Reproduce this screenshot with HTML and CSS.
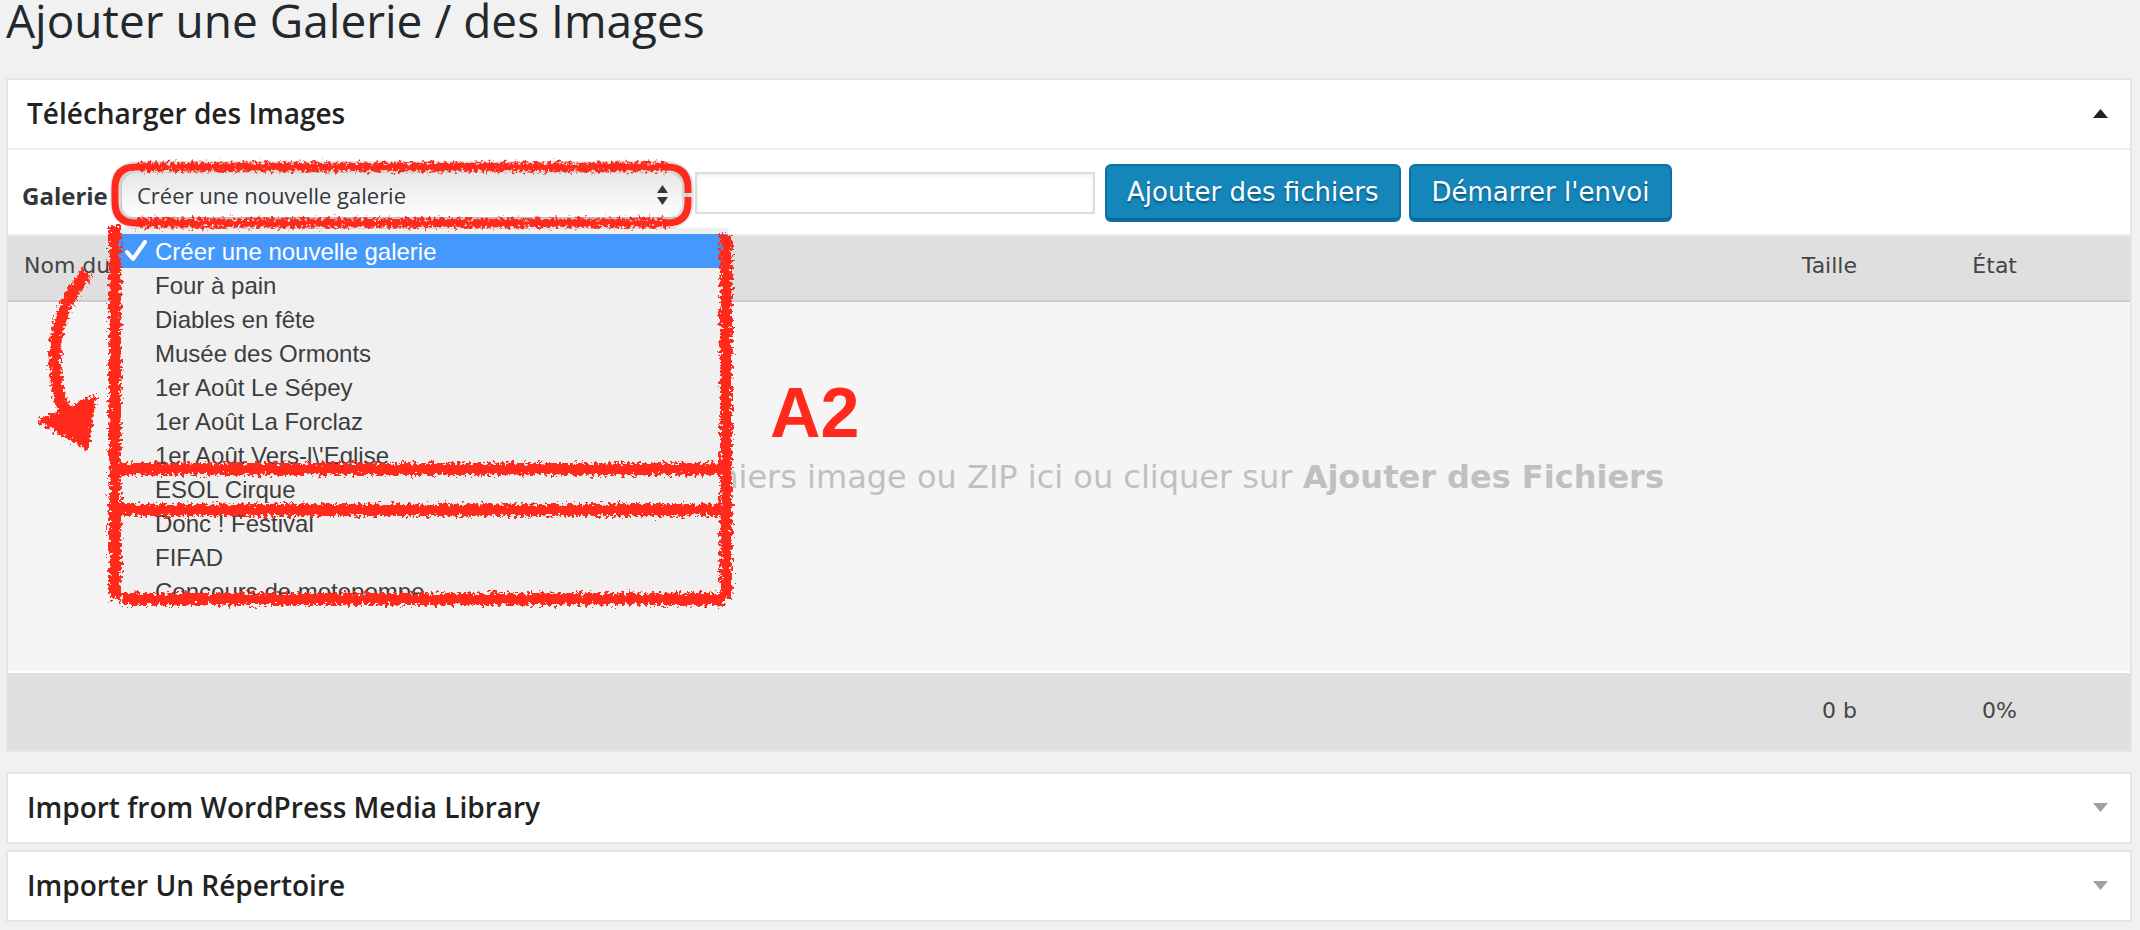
FILE: index.html
```html
<!DOCTYPE html>
<html lang="fr">
<head>
    <meta charset="UTF-8">
    <title>Ajouter une Galerie / des Images</title>
    <link rel="stylesheet" href="styles.css">
</head>
<body>
    <h1>Ajouter une Galerie / des Images</h1>

    <section class="panel panel-open">
        <h2 class="panel-title">
            Télécharger des Images
            <svg class="arrow-up" viewBox="0 0 15 9" aria-hidden="true"><path d="M7.500 0 15 9H0z"/></svg>
        </h2>

        <form class="toolbar">
            <label for="galerie">Galerie</label>
            <div class="select-wrap">
                <select id="galerie">
                    <option selected>Créer une nouvelle galerie</option>
                    <option>Four à pain</option>
                    <option>Diables en fête</option>
                    <option>Musée des Ormonts</option>
                    <option>1er Août Le Sépey</option>
                    <option>1er Août La Forclaz</option>
                    <option>1er Août Vers-l\'Eglise</option>
                    <option>ESOL Cirque</option>
                    <option>Donc ! Festival</option>
                    <option>FIFAD</option>
                    <option>Concours de motopompe</option>
                </select>
                <svg class="select-arrows" viewBox="0 0 11 20" aria-hidden="true"><path d="M5.500 0 11 8H0zM0 12h11l-5.500 8z"/></svg>
            </div>
            <input class="gallery-name" type="text" aria-label="Nom de la galerie">
            <button type="button" class="button-primary">Ajouter des fichiers</button>
            <button type="button" class="button-primary">Démarrer l'envoi</button>
        </form>

        <table class="files">
            <thead>
                <tr>
                    <th class="col-name">Nom du fichier</th>
                    <th class="col-size">Taille</th>
                    <th class="col-status">État</th>
                </tr>
            </thead>
            <tbody>
                <tr>
                    <td class="drop-area" colspan="3">Déposez des fichiers image ou ZIP ici ou cliquer sur <strong>Ajouter des Fichiers</strong></td>
                </tr>
            </tbody>
            <tfoot>
                <tr>
                    <td class="col-name"></td>
                    <td class="col-size">0 b</td>
                    <td class="col-status">0%</td>
                </tr>
            </tfoot>
        </table>

        <!-- Liste ouverte -->
        <ul class="menu">
            <li class="selected"><svg class="check" viewBox="0 0 22 22" aria-hidden="true"><path d="M2 12 8 19 20 2"/></svg>Créer une nouvelle galerie</li>
            <li>Four à pain</li>
            <li>Diables en fête</li>
            <li>Musée des Ormonts</li>
            <li>1er Août Le Sépey</li>
            <li>1er Août La Forclaz</li>
            <li>1er Août Vers-l\'Eglise</li>
            <li>ESOL Cirque</li>
            <li>Donc ! Festival</li>
            <li>FIFAD</li>
            <li>Concours de motopompe</li>
        </ul>

        <!-- Annotations au crayon rouge -->
        <svg class="marks" viewBox="0 0 740 540" aria-hidden="true">
            <defs>
                <filter id="crayon" filterUnits="userSpaceOnUse" x="0" y="0" width="740" height="540">
                    <feTurbulence type="fractalNoise" baseFrequency="0.3" numOctaves="4" seed="4" result="noise"/>
                    <feDisplacementMap in="SourceGraphic" in2="noise" scale="12" xChannelSelector="R" yChannelSelector="G"/>
                </filter>
            </defs>
            <rect class="shade" x="108" y="87" width="572" height="56" rx="20"/>
            <g filter="url(#crayon)">
                <path class="line" d="M129 87H659M129 143H659"/>
                <path class="line thick" d="M107 146V519M718 154V519M112 389H718M112 430H718M114 519H716"/>
                <path class="line thick" d="M79 193C42 235 40 290 58 335"/>
                <path class="head" d="M33 341 86 317 79 368z"/>
            </g>
            <path class="line corner" d="M133 87H128Q107 87 107 108V122Q107 143 128 143H133M655 87H659Q680 87 680 108V113M680 117V122Q680 143 659 143H655"/>
        </svg>
        <span class="mark-label">A2</span>
    </section>

    <section class="panel">
        <h2 class="panel-title">
            Import from WordPress Media Library
            <svg class="arrow-down" viewBox="0 0 15 9" aria-hidden="true"><path d="M0 0h15L7.500 9z"/></svg>
        </h2>
    </section>

    <section class="panel">
        <h2 class="panel-title">
            Importer Un Répertoire
            <svg class="arrow-down" viewBox="0 0 15 9" aria-hidden="true"><path d="M0 0h15L7.500 9z"/></svg>
        </h2>
    </section>
</body>
</html>
```
FILE: styles.css
```css
* {
    box-sizing: border-box;
}

body {
    margin: 0;
    padding: 0 8px 8px 6px;
    background-color: #f1f1f1;
    color: #32373c;
    font-family: "Open Sans", sans-serif;
    font-size: 22px;
}

h1 {
    margin: 0;
    padding-bottom: 38px;
    color: #23282d;
    font-size: 46px;
    font-weight: 400;
    line-height: 40px;
}

/* Blocs */
.panel {
    position: relative;
    margin-bottom: 6px;
    border: 2px solid #e5e5e5;
    background-color: #fff;
}

.panel-open {
    margin-bottom: 20px;
}

.panel-title {
    display: flex;
    align-items: center;
    justify-content: space-between;
    margin: 0;
    padding: 13px 22px 15px 19px;
    color: #222;
    font-size: 28px;
    font-weight: 600;
    line-height: 40px;
}

.panel-open .panel-title {
    border-bottom: 2px solid #eee;
}

.arrow-up,
.arrow-down {
    width: 15px;
    height: 9px;
    fill: #222;
}

.arrow-down {
    fill: #a0a0a0;
}

/* Barre d'outils */
.toolbar {
    display: flex;
    align-items: center;
    height: 86px;
    padding-top: 2px;
    padding-left: 14px;
    border-bottom: 2px solid #eee;
}

.toolbar label {
    width: 100px;
    margin-top: 4px;
    font-weight: 700;
    font-size: 24px;
}

.select-wrap {
    position: relative;
    width: 564px;
    margin-top: 4px;
    margin-right: 9px;
}

.select-wrap select {
    display: block;
    width: 100%;
    height: 44px;
    padding: 0 15px;
    appearance: none;
    border: 0;
    border-radius: 8px;
    background: linear-gradient(#e6e6e6, #fff);
    box-shadow: 0 1px 4px rgba(0, 0, 0, 0.3);
    color: #32373c;
    font-family: inherit;
    font-size: 22px;
}

.select-arrows {
    position: absolute;
    top: 12px;
    right: 18px;
    width: 11px;
    height: 20px;
    fill: #32373c;
}

.gallery-name {
    width: 400px;
    height: 42px;
    margin-right: 10px;
    border: 2px solid #ddd;
    box-shadow: inset 0 2px 4px rgba(0, 0, 0, 0.07);
    font: inherit;
}

.button-primary {
    height: 58px;
    margin-right: 8px;
    padding: 0 21px 2px 20px;
    border: 2px solid #0b72a4;
    border-radius: 6px;
    background-color: #1586ba;
    box-shadow: inset 0 -2px 0 #0e6596;
    color: #fff;
    font-family: "DejaVu Sans", sans-serif;
    font-size: 26px;
    text-shadow: 0 2px 2px rgba(0, 60, 100, 0.6);
}

/* Table des fichiers */
.files {
    width: 100%;
    table-layout: fixed;
    border-collapse: collapse;
    color: #444;
    font-family: "DejaVu Sans", sans-serif;
}

.files th,
.files tfoot td {
    height: 65px;
    padding: 0 0 5px;
    background-color: #dfdfdf;
    font-weight: 400;
    text-align: right;
}

.files th {
    border-bottom: 2px solid #ccc;
}

.files tfoot td {
    height: 78px;
    padding-bottom: 3px;
    border-top: 2px solid #fff;
}

.files .col-name {
    padding-left: 16px;
    text-align: left;
}

.files .col-size {
    width: 200px;
}

.files .col-status {
    width: 273px;
    padding-right: 113px;
}

.files .drop-area {
    height: 371px;
    padding: 0 8px 20px 0;
    background-color: #f5f5f5;
    color: #c0c0c0;
    font-size: 32px;
    text-align: center;
}

/* Menu */
.menu {
    position: absolute;
    top: 148px;
    left: 110px;
    width: 610px;
    height: 372px;
    margin: 0;
    padding: 6px 0 0;
    overflow: hidden;
    background-color: #f0f0f0;
    color: #3d3d3d;
    font-family: "Liberation Sans", sans-serif;
    font-size: 24px;
    line-height: 32px;
    list-style: none;
}

.menu li {
    position: relative;
    padding-top: 2px;
    padding-left: 37px;
}

.menu .selected {
    background-color: #4598fc;
    color: #fff;
}

.check {
    position: absolute;
    top: 6px;
    left: 7px;
    width: 22px;
    height: 22px;
    fill: none;
    stroke: #fff;
    stroke-width: 4;
    stroke-linecap: round;
    stroke-linejoin: round;
}

/* Annotations */
.marks {
    position: absolute;
    top: 0;
    left: 0;
    width: 740px;
    height: 540px;
    pointer-events: none;
}

.line {
    fill: none;
    stroke: #ff2a1c;
    stroke-width: 9;
}

.thick {
    stroke-width: 12;
}

.corner {
    stroke-width: 7;
}

.shade {
    fill: none;
    stroke: rgba(0, 0, 0, 0.1);
    stroke-width: 12;
}

.head {
    fill: #ff2a1c;
    stroke: #ff2a1c;
    stroke-width: 4;
    stroke-linejoin: round;
}

.mark-label {
    position: absolute;
    top: 293px;
    left: 762px;
    color: #ff2a1c;
    font-family: "Liberation Sans", sans-serif;
    font-size: 70px;
    font-weight: 700;
    line-height: 80px;
}
```
